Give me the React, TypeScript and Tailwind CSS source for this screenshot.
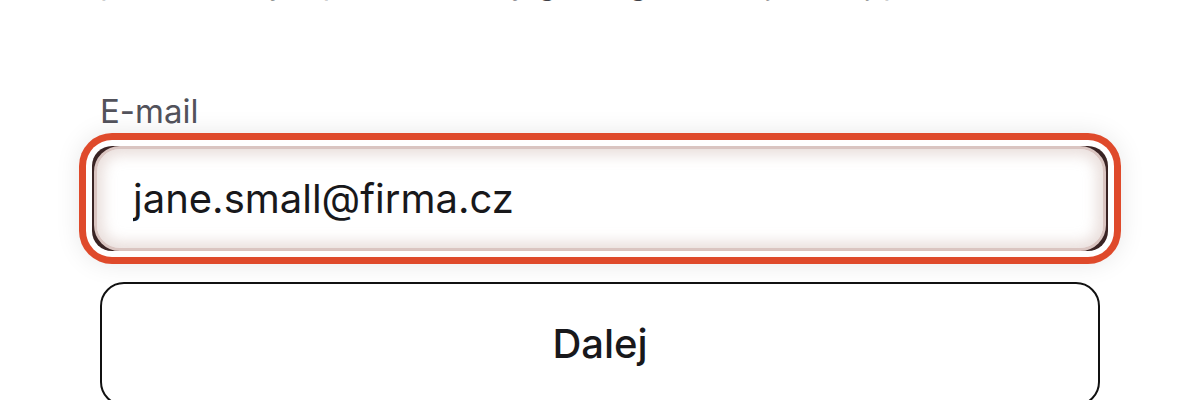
export default function App() {
  return (
    <div className="h-[400px] w-[1200px] overflow-hidden bg-white font-['Inter','Noto_Sans',sans-serif]">
      <div className="mx-[100px] w-[1000px]">
        {/* wrapped intro paragraph, only its last line peeks in at the top */}
        <p className="-mt-[37px] whitespace-nowrap text-[32px] leading-[40px] text-[#3f3f46]">
          pro všechny a pracovní účty g Google, zadejte svůj pracovní e-mail
        </p>

        <label
          htmlFor="email"
          className="mt-[88px] block text-[33px] leading-[40px] text-[#52525b]"
        >
          E-mail
        </label>

        <div className="-mx-[8px] mt-[15px] rounded-[20px] bg-[#3a2424] px-[2px] shadow-[0_0_0_6px_#fff,0_0_0_13px_#df4a2b,0_0_26px_12px_rgba(0,0,0,0.10)]">
          <div className="flex h-[105px] items-center rounded-[26px] border-[3px] border-[#dac5c1] bg-white pl-[36px] shadow-[inset_0_0_14px_6px_rgba(200,172,166,0.40)]">
            <input
              id="email"
              type="email"
              defaultValue="jane.small@firma.cz"
              className="w-full bg-transparent text-[40px] leading-[48px] text-[#18181b] outline-none"
            />
          </div>
        </div>

        <button
          type="button"
          className="mt-[31px] flex h-[124px] w-full items-center justify-center rounded-[24px] border-2 border-[#111] text-[40px] font-medium text-[#18181b]"
        >
          Dalej
        </button>
      </div>
    </div>
  )
}
